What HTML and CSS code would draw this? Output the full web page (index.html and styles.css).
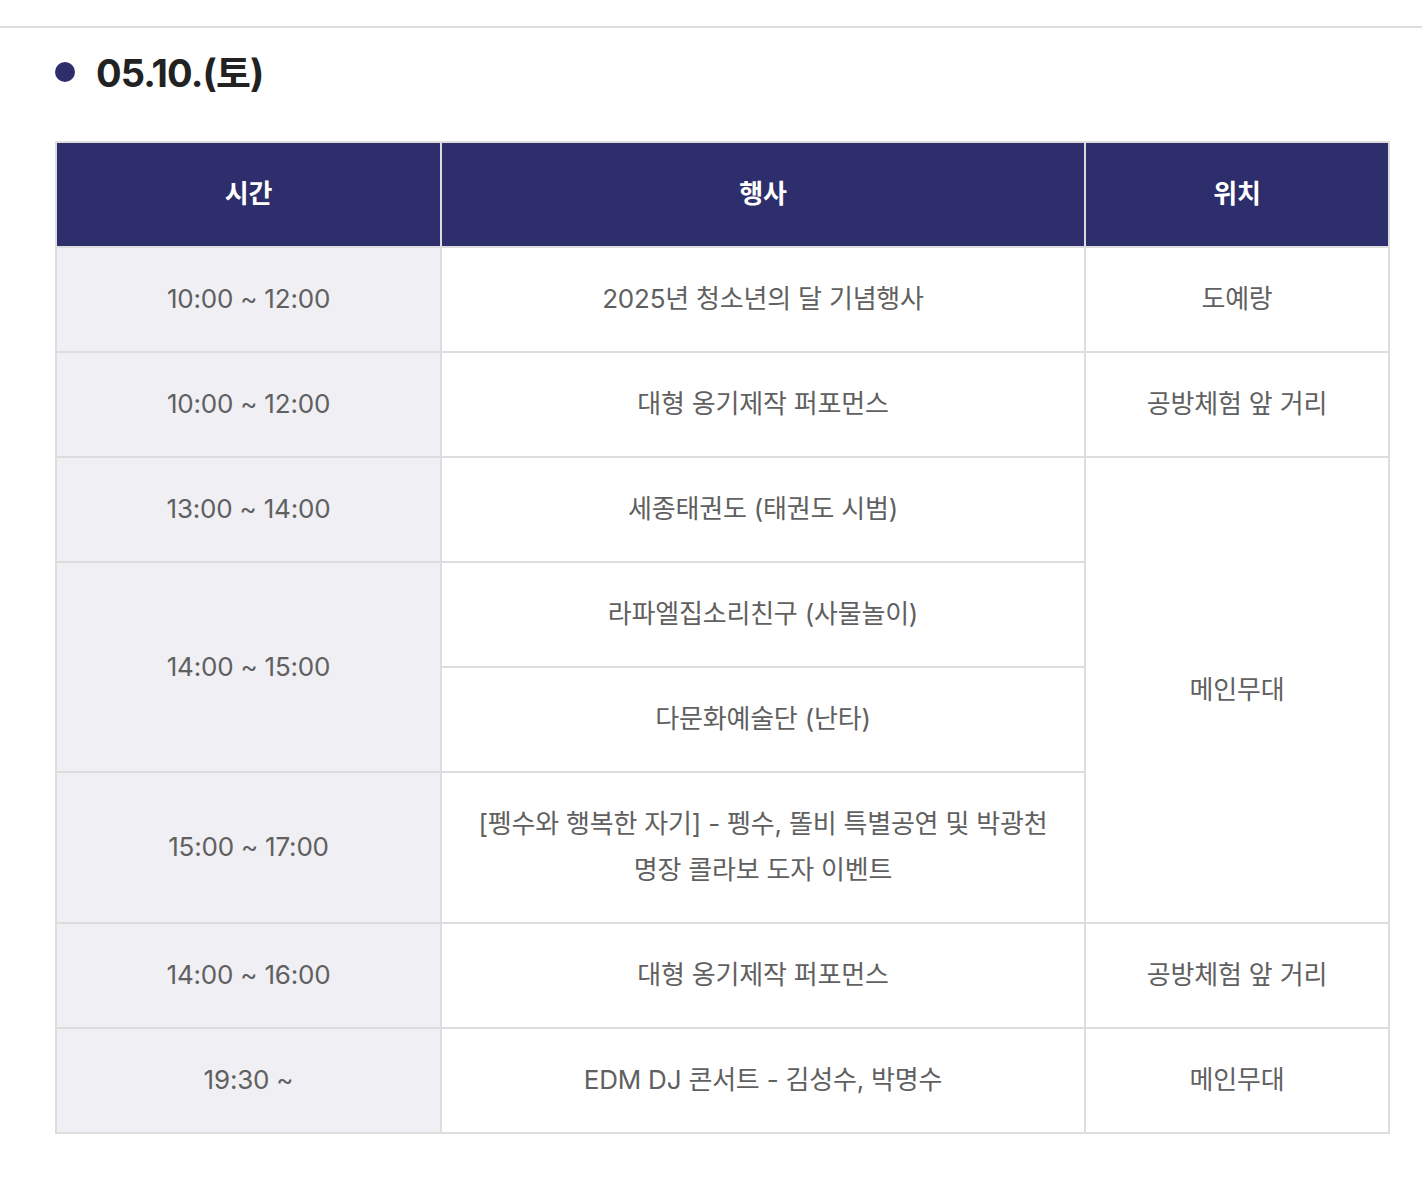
FILE: index.html
```html
<!DOCTYPE html>
<html lang="ko">
<head>
<meta charset="utf-8">
<title>05.10.(토)</title>
<link rel="stylesheet" href="styles.css">
</head>
<body>
<div class="topline"></div>
<section class="day">
  <h2 class="day-title"><span class="dot"></span>05.10.(토)</h2>
  <table class="schedule">
    <colgroup>
      <col class="c-time">
      <col class="c-event">
      <col class="c-place">
    </colgroup>
    <thead>
      <tr><th>시간</th><th>행사</th><th>위치</th></tr>
    </thead>
    <tbody>
      <tr><td class="time">10:00 ~ 12:00</td><td>2025년 청소년의 달 기념행사</td><td>도예랑</td></tr>
      <tr><td class="time">10:00 ~ 12:00</td><td>대형 옹기제작 퍼포먼스</td><td>공방체험 앞 거리</td></tr>
      <tr><td class="time">13:00 ~ 14:00</td><td>세종태권도 (태권도 시범)</td><td rowspan="4">메인무대</td></tr>
      <tr><td class="time" rowspan="2">14:00 ~ 15:00</td><td>라파엘집소리친구 (사물놀이)</td></tr>
      <tr><td>다문화예술단 (난타)</td></tr>
      <tr><td class="time">15:00 ~ 17:00</td><td class="multi">[펭수와 행복한 자기] - 펭수, 똘비 특별공연 및 박광천<br>명장 콜라보 도자 이벤트</td></tr>
      <tr><td class="time">14:00 ~ 16:00</td><td>대형 옹기제작 퍼포먼스</td><td>공방체험 앞 거리</td></tr>
      <tr><td class="time">19:30 ~</td><td>EDM DJ 콘서트 - 김성수, 박명수</td><td>메인무대</td></tr>
    </tbody>
  </table>
</section>
</body>
</html>
```
FILE: styles.css
```css
html, body {
  margin: 0;
  padding: 0;
  background: #fff;
}
body {
  font-family: "Inter", "Noto Sans CJK KR", "Noto Sans", sans-serif;
  color: #666;
}
.topline {
  margin-top: 26px;
  height: 2px;
  background: #dedede;
}
.day {
  padding: 0 33px 60px 55px;
}
.day-title {
  display: flex;
  align-items: center;
  gap: 21px;
  margin: 18px 0 47px;
  height: 48px;
  font-size: 38px;
  font-weight: 700;
  letter-spacing: -0.9px;
  color: #222;
}
.dot {
  width: 20px;
  height: 20px;
  border-radius: 50%;
  background: #2d2e6b;
  flex: none;
  margin-top: 4px;
}
.schedule {
  width: 1333px;
  border-collapse: collapse;
  table-layout: fixed;
  border: 2px solid #dddddd;
}
.c-time { width: 385px; }
.c-event { width: 644px; }
.c-place { width: 304px; }
.schedule th,
.schedule td {
  border: 2px solid #dddddd;
  text-align: center;
  vertical-align: middle;
  font-size: 26px;
  line-height: 46px;
  letter-spacing: -0.2px;
  padding: 28px 10px 29px;
}
.schedule th {
  background: #2d2e6b;
  color: #fff;
  font-weight: 700;
}
.schedule td {
  background: #fff;
  color: #606060;
  font-weight: 400;
}
.schedule td.time {
  background: #efeff4;
}
```
